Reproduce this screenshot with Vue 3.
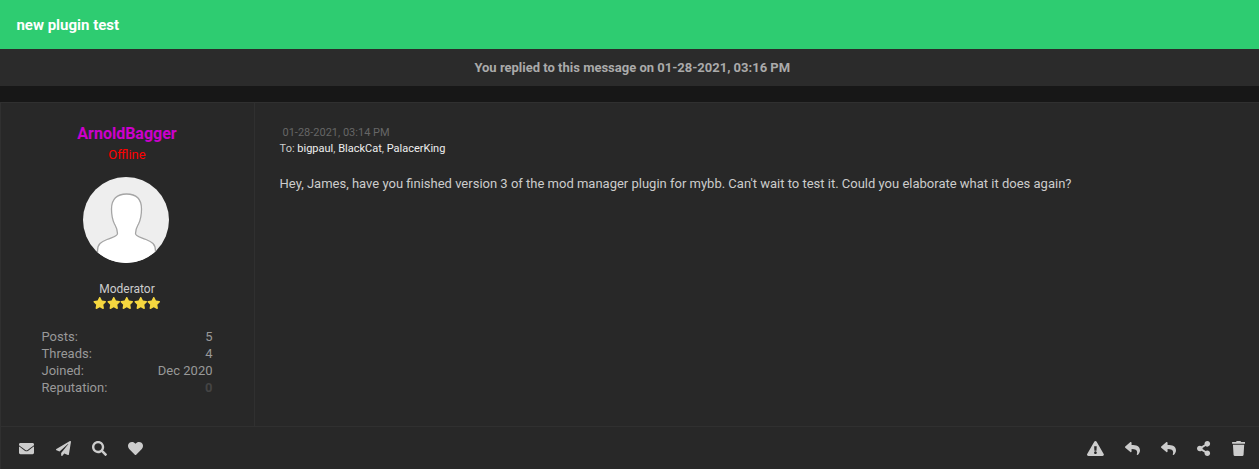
<script setup>
import { h } from 'vue'

const paths = {
  envelope: [512, 'M502.3 190.8c3.9-3.1 9.7-.2 9.7 4.7V400c0 26.5-21.5 48-48 48H48c-26.5 0-48-21.5-48-48V195.6c0-5 5.7-7.8 9.7-4.7 22.4 17.4 52.1 39.5 154.1 113.6 21.1 15.4 56.7 47.8 92.2 47.6 35.7.3 72-32.8 92.3-47.6 102-74.1 131.6-96.3 154-113.7zM256 320c23.2.4 56.6-29.2 73.4-41.4 132.7-96.3 142.8-104.7 173.4-128.7 5.8-4.5 9.2-11.5 9.2-18.9v-19c0-26.5-21.5-48-48-48H48c-26.5 0-48 21.5-48 48v19c0 7.4 3.4 14.3 9.2 18.9 30.6 23.9 40.7 32.4 173.4 128.7 16.8 12.2 50.2 41.8 73.4 41.4z'],
  plane: [512, 'M476 3.2L12.5 270.6c-18.1 10.4-15.8 35.6 2.2 43.2L121 358.4l287.3-253.2c5.5-4.9 13.3 2.6 8.6 8.3L176 407v80.5c0 23.6 28.5 32.9 42.5 15.8L282 426l124.6 52.2c14.2 6 30.4-2.9 33-18.2l72-432C515 7.8 493.3-6.8 476 3.2z'],
  search: [512, 'M505 442.7L405.3 343c-4.5-4.5-10.6-7-17-7H372c27.6-35.3 44-79.7 44-128C416 93.1 322.9 0 208 0S0 93.1 0 208s93.1 208 208 208c48.3 0 92.7-16.4 128-44v16.3c0 6.4 2.5 12.5 7 17l99.7 99.7c9.4 9.4 24.6 9.4 33.9 0l28.3-28.3c9.4-9.4 9.4-24.6.1-34zM208 336c-70.7 0-128-57.2-128-128 0-70.7 57.2-128 128-128 70.7 0 128 57.2 128 128 0 70.7-57.2 128-128 128z'],
  heart: [512, 'M462.3 62.6C407.5 15.9 326 24.3 275.7 76.2L256 96.5l-19.7-20.3C186.1 24.3 104.5 15.9 49.7 62.6c-62.8 53.6-66.1 149.8-9.9 207.9l193.5 199.8c12.5 12.9 32.8 12.9 45.3 0l193.5-199.8c56.3-58.1 53-154.3-9.8-207.9z'],
  warning: [576, 'M569.517 440.013C587.975 472.007 564.806 512 527.94 512H48.054c-36.937 0-59.999-40.055-41.577-71.987L246.423 23.985c18.467-32.009 64.72-31.951 83.154 0l239.94 416.028zM288 354c-25.405 0-46 20.595-46 46s20.595 46 46 46 46-20.595 46-46-20.595-46-46-46zm-43.673-165.346l7.418 136c.347 6.364 5.609 11.346 11.982 11.346h48.546c6.373 0 11.635-4.982 11.982-11.346l7.418-136c.375-6.874-5.098-12.654-11.982-12.654h-63.383c-6.884 0-12.356 5.78-11.981 12.654z'],
  reply: [512, 'M8.309 189.836L184.313 37.851C199.719 24.546 224 35.347 224 56.015v80.053c160.629 1.839 288 34.032 288 186.258 0 61.441-39.581 122.309-83.333 154.132-13.653 9.931-33.111-2.533-28.077-18.631 45.344-145.012-21.507-183.51-176.59-185.742V360c0 20.7-24.3 31.453-39.687 18.164l-176.004-152c-11.071-9.562-11.086-26.753 0-36.328z'],
  share: [448, 'M352 320c-22.608 0-43.387 7.819-59.79 20.895l-102.486-64.054a96.551 96.551 0 0 0 0-41.683l102.486-64.054C308.613 184.181 329.392 192 352 192c53.019 0 96-42.981 96-96S405.019 0 352 0s-96 42.981-96 96c0 7.158.79 14.13 2.276 20.841L155.79 180.895C139.387 167.819 118.608 160 96 160c-53.019 0-96 42.981-96 96s42.981 96 96 96c22.608 0 43.387-7.819 59.79-20.895l102.486 64.054A96.301 96.301 0 0 0 256 416c0 53.019 42.981 96 96 96s96-42.981 96-96-42.981-96-96-96z'],
  trash: [448, 'M432 32H312l-9.4-18.7A24 24 0 0 0 281.1 0H166.8a23.72 23.72 0 0 0-21.4 13.3L136 32H16A16 16 0 0 0 0 48v32a16 16 0 0 0 16 16h416a16 16 0 0 0 16-16V48a16 16 0 0 0-16-16zM53.2 467a48 48 0 0 0 47.9 45h245.8a48 48 0 0 0 47.9-45L416 128H32z'],
  star: [576, 'M259.3 17.8L194 150.2 47.9 171.5c-26.2 3.8-36.7 36.1-17.7 54.6l105.7 103-25 145.5c-4.5 26.3 23.2 46 46.4 33.7L288 439.6l130.7 68.7c23.2 12.2 50.9-7.4 46.4-33.7l-25-145.5 105.7-103c19-18.5 8.5-50.8-17.7-54.6L382 150.2 316.7 17.8c-11.7-23.6-45.6-23.9-57.4 0z'],
}

const Icon = ({ name, size }) => {
  const [w, d] = paths[name]
  return h('svg', { viewBox: `0 0 ${w} 512`, width: (size * w) / 512, height: size }, [
    h('path', { d, fill: 'currentColor' }),
  ])
}
Icon.props = ['name', 'size']

const stats = [
  { label: 'Posts:', value: '5' },
  { label: 'Threads:', value: '4' },
  { label: 'Joined:', value: 'Dec 2020' },
  { label: 'Reputation:', value: '0', neutral: true },
]
const userActions = ['envelope', 'plane', 'search', 'heart']
const postActions = ['warning', 'reply', 'reply', 'share', 'trash']
</script>

<template>
  <div class="page">
    <header class="title">new plugin test</header>
    <div class="notice">You replied to this message on 01-28-2021, 03:16 PM</div>
    <article class="post">
      <div class="main">
        <aside class="author">
          <a class="name">ArnoldBagger</a>
          <span class="status">Offline</span>
          <svg class="avatar" viewBox="0 0 86 86" width="86" height="86">
            <defs>
              <clipPath id="round"><circle cx="43" cy="43" r="43" /></clipPath>
            </defs>
            <g clip-path="url(#round)">
              <rect width="86" height="86" fill="#eeeeee" />
              <path
                d="M14.5 88V74C14.5 67 18 65 24 62.5C30 60 34.5 59.500 34.500 56.500C34.500 52 34 51.500 31.500 47C29 42 28.500 38 28.500 32C28.500 22 34 17 43.500 17C53 17 58.500 22 58.500 32C58.500 38 58 42 55.500 47C53 51.500 52.500 52 52.500 56.500C52.500 59.500 57 60 63 62.500C69 65 72.500 67 72.500 74V88Z"
                fill="#fff"
                stroke="#a5a5a5"
                stroke-width="1.300"
              />
            </g>
          </svg>
          <span class="role">Moderator</span>
          <div class="stars"><Icon v-for="n in 5" :key="n" name="star" :size="12" /></div>
          <dl class="stats">
            <div v-for="s in stats" :key="s.label" class="stat">
              <dt>{{ s.label }}</dt>
              <dd :class="{ neutral: s.neutral }">{{ s.value }}</dd>
            </div>
          </dl>
        </aside>
        <section class="message">
          <div class="date">01-28-2021, 03:14 PM</div>
          <div class="to">To: <a>bigpaul</a>, <a>BlackCat</a>, <a>PalacerKing</a></div>
          <p class="body">Hey, James, have you finished version 3 of the mod manager plugin for mybb. Can't wait to test it. Could you elaborate what it does again?</p>
        </section>
      </div>
      <footer class="actions">
        <div class="group left"><Icon v-for="n in userActions" :key="n" :name="n" :size="15" /></div>
        <div class="group right"><Icon v-for="(n, i) in postActions" :key="i" :name="n" :size="15" /></div>
      </footer>
    </article>
  </div>
</template>

<style>
body {
  background: #171717;
}
</style>

<style scoped>
.page {
  height: 469px;
  display: flex;
  flex-direction: column;
  overflow: hidden;
  font-family: Roboto, sans-serif;
  font-size: 13px;
  color: #ccc;
  background: #171717;
}
.title {
  box-sizing: border-box;
  height: 49px;
  padding-top: 1px;
  line-height: 48px;
  padding-left: 16.400px;
  background: #2ecc71;
  color: #fff;
  font-size: 15px;
  font-weight: 700;
}
.notice {
  height: 37px;
  line-height: 37px;
  padding-left: 5.500px;
  background: #2b2b2b;
  color: #aaa;
  text-align: center;
  font-weight: 700;
}
.post {
  flex: 1;
  margin-top: 16px;
  border-top: 1px solid #303030;
  border-left: 1px solid #303030;
  background: #282828;
  display: flex;
  flex-direction: column;
}
.main {
  height: 323px;
  display: flex;
}
.author {
  box-sizing: border-box;
  width: 254px;
  padding: 20px 1px 0 0;
  border-right: 1px solid #303030;
  display: flex;
  flex-direction: column;
  align-items: center;
}
.name {
  line-height: 22px;
  font-size: 16px;
  font-weight: 700;
  color: #c0c;
}
.status {
  margin-top: 1px;
  line-height: 18px;
  color: #f00;
}
.avatar {
  margin: 12.600px 3px 0 0;
}
.role {
  margin-top: 18.400px;
  line-height: 16px;
  font-size: 12px;
}
.stars {
  display: flex;
  margin-top: 0.500px;
  color: #f5d73f;
}
.stats {
  width: 171px;
  margin: 18.500px 0 0;
  color: #999;
}
.stat {
  display: flex;
  justify-content: space-between;
  line-height: 17px;
}
dd {
  margin: 0;
}
.neutral {
  color: #444;
  font-weight: 700;
}
.message {
  padding: 22px 0 0 24.600px;
}
.date {
  padding-left: 2.900px;
  line-height: 16px;
  font-size: 11px;
  color: #666;
}
.to {
  line-height: 16px;
  font-size: 11px;
}
.to a {
  color: #eee;
}
.body {
  margin: 18px 0 0;
  line-height: 18px;
}
.actions {
  flex: 1;
  border-top: 1px solid #303030;
  padding: 0 14px 0 18.400px;
  display: flex;
  align-items: center;
  justify-content: space-between;
}
.group {
  display: flex;
  align-items: center;
  padding-top: 1px;
  color: #ccc;
}
.left {
  gap: 21.300px;
}
.right {
  gap: 21.300px;
}
</style>
